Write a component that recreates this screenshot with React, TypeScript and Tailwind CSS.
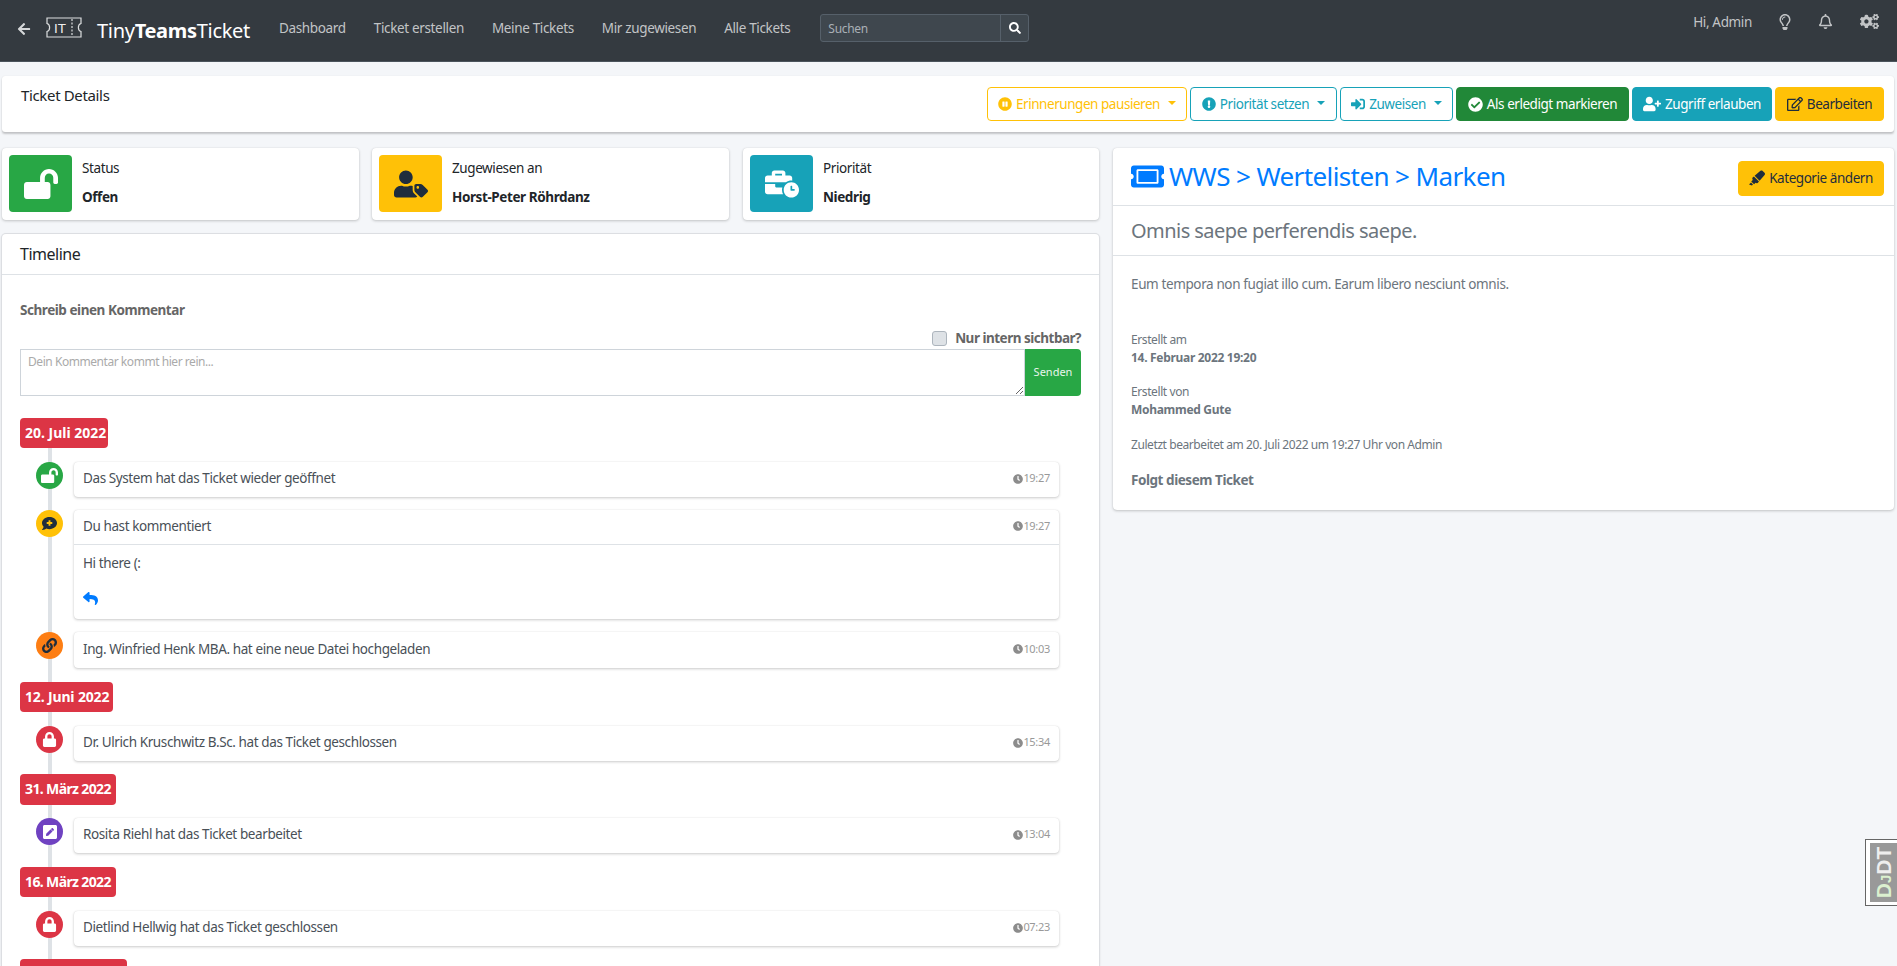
import React from "react";
import { FaArrowLeft, FaSearch, FaRegLightbulb, FaRegBell, FaCogs, FaPauseCircle, FaExclamationCircle, FaSignInAlt, FaCheckCircle, FaUserPlus, FaRegEdit, FaLockOpen, FaUserTag, FaBusinessTime, FaTicketAlt, FaHighlighter, FaLock, FaLink, FaPenSquare, FaReply, FaClock, FaCommentMedical } from "react-icons/fa";

const font = { fontFamily: '"Noto Sans", sans-serif' };
const cardShadow = "shadow-[0_0_1px_rgba(0,0,0,.125),0_1px_3px_rgba(0,0,0,.2)]";

function NavLink({ children }: { children: React.ReactNode }) {
  return <a className="text-[13.5px] tracking-[-0.35px] leading-[22px] text-[#c2c4c6]">{children}</a>;
}

function Btn({ cls, icon, label, caret }: { cls: string; icon: React.ReactNode; label: string; caret?: boolean }) {
  return (
    <button className={`flex items-center justify-center gap-[4px] rounded-[4px] border text-[13.5px] tracking-[-0.45px] ${cls}`}>
      {icon}
      <span>{label}</span>
      {caret && <span className="ml-[4px] mb-[3px] w-0 h-0 border-x-[4px] border-t-[4px] border-x-transparent border-t-current" />}
    </button>
  );
}

function Info({ color, icon, title, value, iconColor, cls }: { color: string; icon: React.ReactNode; title: string; value: string; iconColor: string; cls: string }) {
  return (
    <div className={`h-[72px] bg-white rounded-[4px] ${cardShadow} pl-[7px] pt-[7px] flex ${cls}`}>
      <div className={`w-[63px] h-[57px] rounded-[4px] flex items-center justify-center text-[34px] ${color} ${iconColor}`}>{icon}</div>
      <div className="pl-[10px] flex flex-col text-[13.5px] tracking-[-0.4px] text-[#212529] pt-[1px]">
        <span className="h-[30px] leading-[24px]">{title}</span>
        <b className="font-bold leading-[22px]">{value}</b>
      </div>
    </div>
  );
}

function DateTag({ children, cls }: { children: React.ReactNode; cls: string }) {
  return <div className={`self-start relative bg-[#dc3545] text-white font-bold text-[14px] rounded-[4px] flex items-center pl-[5px] pb-[2px] whitespace-nowrap ${cls}`}>{children}</div>;
}

function Item({ color, icon, text, time, iconColor = "text-white", head = "h-[35px]", iconSize = "text-[15px]", children }: { color: string; icon: React.ReactNode; text: string; time: string; iconColor?: string; head?: string; iconSize?: string; children?: React.ReactNode }) {
  return (
    <div className="relative flex pl-[54px] pr-[22px]">
      <div className={`absolute left-[16px] top-0 w-[27px] h-[27px] rounded-full flex items-center justify-center ${iconSize} ${color} ${iconColor}`}>{icon}</div>
      <div className={`flex-1 bg-white rounded-[4px] ${cardShadow}`}>
        <div className={`${head} flex items-center justify-between pl-[9px] pr-[9px] pb-[2px] text-[13.5px] tracking-[-0.4px] text-[#495057]`}>
          <span>{text}</span>
          <span className="flex items-center text-[11px] tracking-[-0.3px] text-[#999]"><FaClock className="text-[10px] text-[#8c8c8c]" />{time}</span>
        </div>
        {children}
      </div>
    </div>
  );
}

export default function App() {
  return (
    <div style={font} className="w-[1897px] h-[966px] overflow-hidden bg-[#f4f6f9] flex flex-col">
      <nav className="h-[62px] shrink-0 bg-[#343a40] border-b border-b-[#4b545c] flex items-start text-[#c2c4c6]">
        <FaArrowLeft className="ml-[17px] mt-[22px] text-[14px] text-[#d5d7d9]" />
        <svg className="ml-[15px] mt-[17px]" width="36" height="21" viewBox="0 0 36 21" fill="none" stroke="#dcdedf" strokeWidth="1.2">
          <path d="M1 1H35V6.5C31.5 7.5 31.5 13.5 35 14.5V20H1V14.5C4.5 13.5 4.5 7.5 1 6.5Z" />
          <path d="M26 2V19" strokeDasharray="2 1.5" />
          <text x="8" y="15.5" fontSize="13.5" fill="#eee" stroke="none" style={{ fontFamily: "Liberation Sans, sans-serif" }}>IT</text>
        </svg>
        <div className="ml-[15px] mt-[17px] text-[20px] leading-[28px] tracking-[-0.3px] text-white">Tiny<b className="font-bold">Teams</b>Ticket</div>
        <div className="ml-[29px] mt-[17px] flex gap-[28px]">
          <NavLink>Dashboard</NavLink>
          <NavLink>Ticket erstellen</NavLink>
          <NavLink>Meine Tickets</NavLink>
          <NavLink>Mir zugewiesen</NavLink>
          <NavLink>Alle Tickets</NavLink>
        </div>
        <div className="ml-[30px] mt-[14px] flex h-[28px] w-[209px] rounded-[3px] border border-[#56606a] bg-[#3f474e]">
          <span className="flex-1 pl-[7px] text-[12px] tracking-[-0.3px] leading-[27px] text-[#aab0b6]">Suchen</span>
          <span className="w-[28px] border-l border-[#56606a] flex items-center justify-center text-[12px] text-white"><FaSearch /></span>
        </div>
        <div className="ml-auto flex items-center mt-[12px] pr-[18px] text-[#c2c4c6]">
          <span className="text-[13.5px] tracking-[-0.35px] leading-[18px]">Hi, Admin</span>
          <FaRegLightbulb className="ml-[25px] text-[16px]" />
          <FaRegBell className="ml-[25px] text-[15px]" />
          <FaCogs className="ml-[27px] text-[19px]" />
        </div>
      </nav>

      <div className="mt-[14px] ml-[2px] mr-[3px] h-[56px] shrink-0 bg-white rounded-[3px] shadow-[0_0_1px_rgba(0,0,0,.125),0_2px_2px_rgba(0,0,0,.2)] flex justify-between items-start pr-[10px]">
        <span className="text-[15px] tracking-[-0.35px] leading-[24px] pl-[19px] pt-[7px] text-[#212529]">Ticket Details</span>
        <div className="flex gap-[3px] mt-[11px] h-[34px]">
          <Btn cls="w-[200px] border-[#ffc107] text-[#ffc107] bg-white" icon={<FaPauseCircle className="text-[14px]" />} label="Erinnerungen pausieren" caret />
          <Btn cls="w-[147px] border-[#17a2b8] text-[#17a2b8] bg-white" icon={<FaExclamationCircle className="text-[14px]" />} label="Priorität setzen" caret />
          <Btn cls="w-[113px] border-[#17a2b8] text-[#17a2b8] bg-white" icon={<FaSignInAlt className="text-[14px]" />} label="Zuweisen" caret />
          <Btn cls="w-[173px] border-[#218838] text-white bg-[#218838]" icon={<FaCheckCircle className="text-[15px]" />} label="Als erledigt markieren" />
          <Btn cls="w-[140px] border-[#17a2b8] text-white bg-[#17a2b8]" icon={<FaUserPlus className="text-[18px]" />} label="Zugriff erlauben" />
          <Btn cls="w-[109px] border-[#ffc107] text-[#1f2d3d] bg-[#ffc107]" icon={<FaRegEdit className="text-[16px]" />} label="Bearbeiten" />
        </div>
      </div>

      <div className="mt-[16px] flex-1 flex gap-[14px] min-h-0 pl-[2px] pr-[3px]">
        <div className="w-[1097px] flex flex-col gap-[14px] min-h-0">
          <div className="flex shrink-0">
            <Info cls="w-[357px] mr-[13px]" color="bg-[#28a745]" iconColor="text-white" icon={<FaLockOpen />} title="Status" value="Offen" />
            <Info cls="w-[357px] mr-[14px]" color="bg-[#ffc107]" iconColor="text-[#1f2d3d]" icon={<FaUserTag />} title="Zugewiesen an" value="Horst-Peter Röhrdanz" />
            <Info cls="w-[356px]" color="bg-[#17a2b8]" iconColor="text-white" icon={<FaBusinessTime />} title="Priorität" value="Niedrig" />
          </div>
          <div className="flex-1 bg-white shadow-[0_0_0_1px_#dcdee2,0_1px_3px_rgba(0,0,0,.2)] rounded-t-[4px] flex flex-col min-h-0">
            <div className="h-[41px] shrink-0 border-b border-[#dee2e6] flex items-center px-[18px] text-[16px] tracking-[-0.5px] text-[#212529]">Timeline</div>
            <div className="px-[18px] pt-[25px] flex flex-col">
              <b className="text-[13.5px] tracking-[-0.45px] text-[#666] leading-[20px]">Schreib einen Kommentar</b>
              <div className="flex justify-end items-center h-[22px] mt-[7px] text-[13.5px] tracking-[-0.5px] text-[#666]">
                <span className="w-[15px] h-[15px] rounded-[3px] border border-[#adb5bd] bg-[#dee2e6] mr-[8px]" />
                <b>Nur intern sichtbar?</b>
              </div>
              <div className="flex h-[47px]">
                <textarea placeholder="Dein Kommentar kommt hier rein..." className="flex-1 border border-[#ced4da] px-[7px] py-[3px] text-[12px] tracking-[-0.45px] placeholder:text-[#aaa]" />
                <button className="w-[56px] bg-[#28a745] text-[#e8f5ec] text-[11px] rounded-r-[4px]">Senden</button>
              </div>
              <div className="relative mt-[22px] flex flex-col gap-[13px]">
                <div className="absolute left-[28px] top-0 bottom-[-200px] w-[4px] bg-[#dee2e6]" />
                <DateTag cls="w-[88px] h-[30px] mb-[1px] tracking-[0px]">20. Juli 2022</DateTag>
                <Item color="bg-[#28a745]" icon={<FaLockOpen />} iconSize="text-[17px]" text="Das System hat das Ticket wieder geöffnet" time="19:27" />
                <Item color="bg-[#ffc107]" iconColor="text-[#1f2d3d]" icon={<FaCommentMedical />} text="Du hast kommentiert" time="19:27" head="h-[34px]">
                  <div className="border-t border-[#dee2e6] px-[9px] text-[13.5px] tracking-[-0.4px] text-[#495057] h-[75px] pt-[7px]">
                    <div className="leading-[22px]">Hi there (:</div>
                    <FaReply className="mt-[17px] text-[#007bff] text-[15px]" />
                  </div>
                </Item>
                <Item color="bg-[#fd7e14]" iconColor="text-[#1f2d3d]" icon={<FaLink />} text="Ing. Winfried Henk MBA. hat eine neue Datei hochgeladen" time="10:03" head="h-[36px]" />
                <DateTag cls="w-[93px] h-[30px] my-[1px] tracking-[-0.15px]">12. Juni 2022</DateTag>
                <Item color="bg-[#dc3545]" icon={<FaLock />} text="Dr. Ulrich Kruschwitz B.Sc. hat das Ticket geschlossen" time="15:34" />
                <DateTag cls="w-[96px] h-[31px] tracking-[-0.63px]">31. März 2022</DateTag>
                <Item color="bg-[#6f42c1]" icon={<FaPenSquare />} iconSize="text-[16px]" text="Rosita Riehl hat das Ticket bearbeitet" time="13:04" />
                <DateTag cls="w-[96px] h-[30px] my-[1px] tracking-[-0.63px]">16. März 2022</DateTag>
                <Item color="bg-[#dc3545]" icon={<FaLock />} text="Dietlind Hellwig hat das Ticket geschlossen" time="07:23" />
                <DateTag cls="w-[107px] h-[30px] tracking-[-0.5px]">14. Februar 2022</DateTag>
              </div>
            </div>
          </div>
        </div>

        <div className="flex-1 min-w-0">
          <div className={`bg-white rounded-[4px] ${cardShadow} h-[362px]`}>
            <div className="h-[58px] border-b border-[#dee2e6] flex items-center justify-between pl-[18px] pr-[10px]">
              <div className="flex items-center gap-[5px] text-[#007bff] text-[26px] tracking-[-0.6px]"><FaTicketAlt className="text-[33px]" /><span>WWS &gt; Wertelisten &gt; Marken</span></div>
              <Btn cls="w-[146px] h-[35px] mt-[3px] border-[#ffc107] bg-[#ffc107] text-[#1f2d3d]" icon={<FaHighlighter className="text-[16px]" />} label="Kategorie ändern" />
            </div>
            <div className="h-[50px] border-b border-[#dee2e6] flex items-center px-[18px] text-[20px] tracking-[-0.55px] text-[#6c757d]">Omnis saepe perferendis saepe.</div>
            <div className="px-[18px] text-[#6c757d]">
              <p className="pt-[18px] text-[13.5px] tracking-[-0.38px] leading-[20px]">Eum tempora non fugiat illo cum. Earum libero nesciunt omnis.</p>
              <p className="mt-[37px] text-[12px] tracking-[-0.4px] leading-[18px]">Erstellt am</p>
              <b className="block text-[12px] tracking-[-0.3px] leading-[18px]">14. Februar 2022 19:20</b>
              <p className="mt-[16px] text-[12px] tracking-[-0.4px] leading-[18px]">Erstellt von</p>
              <b className="block text-[12px] tracking-[-0.3px] leading-[18px]">Mohammed Gute</b>
              <p className="mt-[17px] text-[12px] tracking-[-0.42px] leading-[18px]">Zuletzt bearbeitet am 20. Juli 2022 um 19:27 Uhr von Admin</p>
              <b className="block mt-[16px] text-[13.5px] tracking-[-0.45px] leading-[20px]">Folgt diesem Ticket</b>
            </div>
          </div>
        </div>
      </div>

      <div className="absolute left-[1865px] top-[839px] w-[32px] h-[67px] bg-white border-l border-y border-[#666] pl-[4px] py-[3px]">
        <div className="h-full bg-[#999] flex items-center justify-center">
          <span className="-rotate-90 text-[21px] font-bold whitespace-nowrap text-[#eee] leading-none" style={{ fontFamily: "Liberation Sans, sans-serif" }}><span className="text-[#dbf0cf]">D<span className="text-[15px]">J</span></span>DT</span>
        </div>
      </div>
    </div>
  );
}
